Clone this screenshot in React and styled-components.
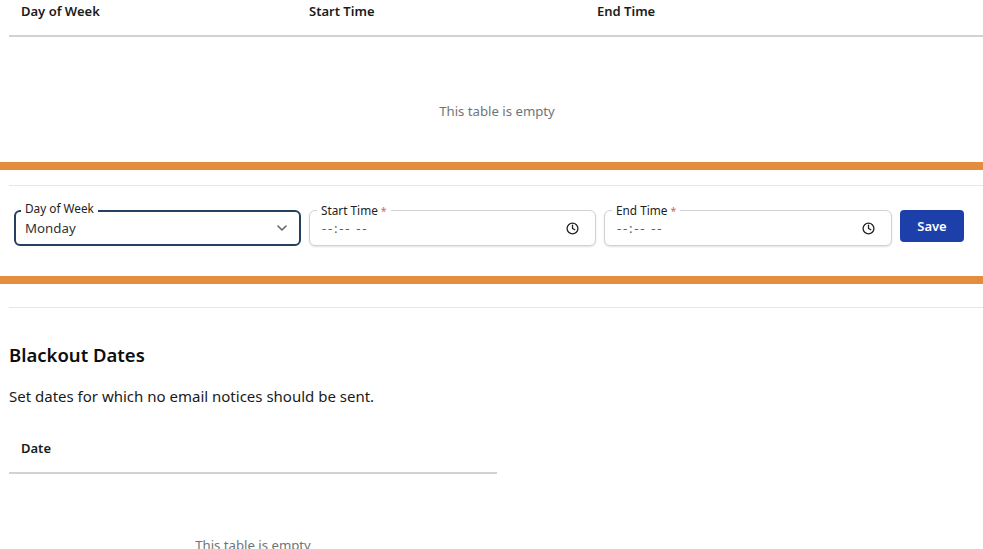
import styled, { createGlobalStyle } from 'styled-components';
import { LuChevronDown, LuClock } from 'react-icons/lu';

const GlobalStyle = createGlobalStyle`
  html, body {
    margin: 0;
    height: 549px;
    overflow: hidden;
    background: #ffffff;
    font-family: "Noto Sans", "Open Sans", sans-serif;
    color: #111111;
  }
`;

const Page = styled.div`
  height: 549px;
  overflow: hidden;
`;

const TableHead = styled.div`
  display: grid;
  grid-template-columns: repeat(${props => props.$cols}, 288px);
  align-items: start;
  height: ${props => props.$height}px;
  margin-left: 9px;
  width: ${props => props.$width};
  box-sizing: border-box;
  border-bottom: 2px solid #d2d2d2;
`;

const HeadCell = styled.div`
  padding-left: 12px;
  padding-top: ${props => props.$top}px;
  font-size: 13px;
  line-height: 18px;
  font-weight: 600;
  color: #1b1b1b;
`;

const EmptyText = styled.div`
  margin-left: 9px;
  width: ${props => props.$width};
  text-align: center;
  font-size: 13.2px;
  line-height: 18px;
  color: #6f7479;
  padding-top: ${props => props.$top}px;
  height: ${props => props.$height}px;
  box-sizing: border-box;
`;

const OrangeBar = styled.div`
  height: 8px;
  background: #e58d3e;
`;

const Rule = styled.div`
  height: 1px;
  margin-left: 9px;
  margin-top: ${props => props.$top}px;
  background: #e6e6e6;
`;

const FormRow = styled.div`
  display: grid;
  grid-template-columns: 287px 287px 288px 64px;
  align-items: start;
  gap: 8px;
  padding: 24px 19px 30px 14px;
`;

const Field = styled.div`
  position: relative;
  height: 36px;
  box-sizing: border-box;
  display: flex;
  align-items: center;
  justify-content: space-between;
  background: #fff;
  border-radius: 6px;
  border: ${props => (props.$focused ? '2px solid #243f5f' : '1px solid #d0d2d6')};
  box-shadow: ${props => (props.$focused ? 'none' : '0 1px 2px rgba(0, 0, 0, 0.12)')};
  padding: ${props => (props.$focused ? '0 9px' : '0 16px 0 12px')};
`;

const FieldLabel = styled.label`
  position: absolute;
  top: ${props => (props.$focused ? '-11px' : '-8px')};
  left: ${props => (props.$focused ? '5px' : '7px')};
  padding: 0 4px;
  background: #fff;
  font-size: 11.8px;
  line-height: 15px;
  color: #222;
`;

const Required = styled.span`
  color: #d0636a;
  margin-left: 3px;
  font-size: 10.5px;
`;

const Value = styled.span`
  font-size: 13.3px;
  line-height: 18px;
  color: ${props => (props.$muted ? '#5b6066' : '#333')};
  letter-spacing: ${props => (props.$muted ? '1.7px' : '0')};
  white-space: pre;
`;

const SaveButton = styled.button`
  height: 32px;
  border: none;
  border-radius: 4px;
  background: #1c3faa;
  color: #fff;
  font-family: inherit;
  font-size: 13px;
  font-weight: 600;
`;

const Heading = styled.h2`
  margin: 35px 0 0 9px;
  font-size: 18.5px;
  line-height: 24px;
  font-weight: 600;
  color: #0d0d0d;
`;

const Description = styled.p`
  margin: 18px 0 0 9px;
  font-size: 15px;
  line-height: 22px;
  color: #1a1a1a;
`;

const TimeField = ({ label }) => (
  <Field>
    <FieldLabel>
      {label}
      <Required>*</Required>
    </FieldLabel>
    <Value $muted>--:-- --</Value>
    <LuClock size={13} color="#222" strokeWidth={2.4} />
  </Field>
);

export default function App() {
  return (
    <Page>
      <GlobalStyle />
      <TableHead $cols={3} $height={37} $width="974px">
        <HeadCell $top={2}>Day of Week</HeadCell>
        <HeadCell $top={2}>Start Time</HeadCell>
        <HeadCell $top={2}>End Time</HeadCell>
      </TableHead>
      <EmptyText $width="976px" $top={65} $height={125}>This table is empty</EmptyText>
      <OrangeBar />
      <Rule $top={15} />
      <FormRow>
        <Field $focused>
          <FieldLabel $focused>Day of Week</FieldLabel>
          <Value>Monday</Value>
          <LuChevronDown size={16} color="#666" strokeWidth={2.4} />
        </Field>
        <TimeField label="Start Time" />
        <TimeField label="End Time" />
        <SaveButton>Save</SaveButton>
      </FormRow>
      <OrangeBar />
      <Rule $top={23} />
      <Heading>Blackout Dates</Heading>
      <Description>Set dates for which no email notices should be sent.</Description>
      <TableHead $cols={1} $height={67} $width="488px">
        <HeadCell $top={32}>Date</HeadCell>
      </TableHead>
      <EmptyText $width="488px" $top={62} $height={90}>This table is empty</EmptyText>
    </Page>
  );
}
